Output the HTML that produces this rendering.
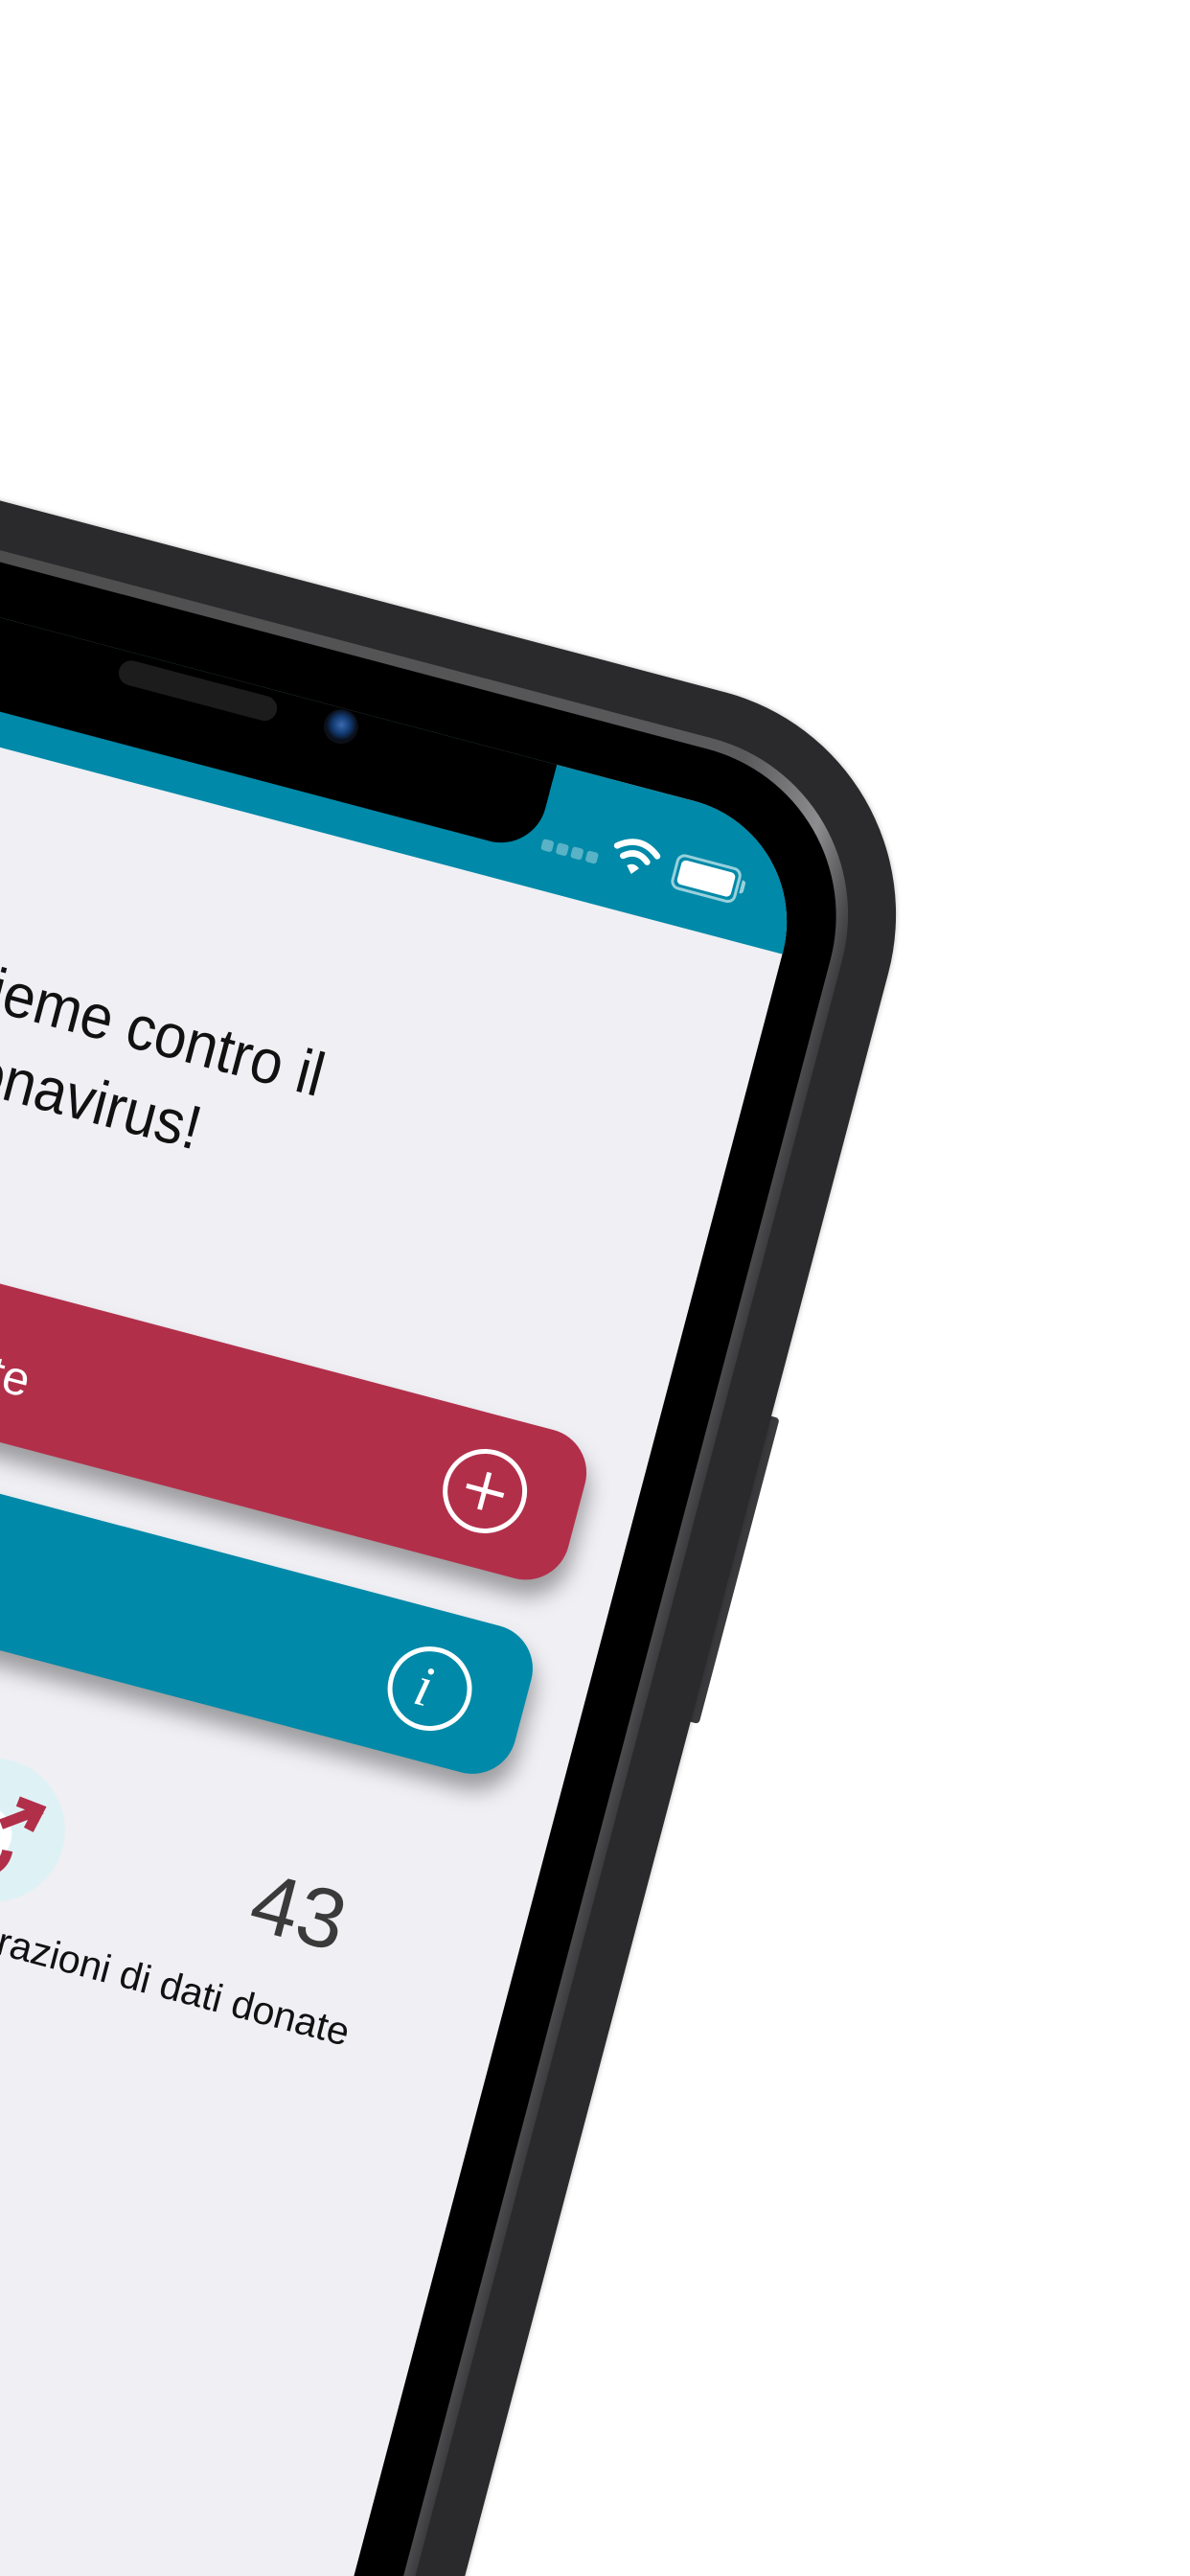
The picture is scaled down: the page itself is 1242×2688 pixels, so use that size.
<!DOCTYPE html>
<html><head><meta charset="utf-8">
<style>
html,body{margin:0;padding:0;background:#fff;width:1242px;height:2688px;overflow:hidden;}
body{font-family:"Liberation Sans",sans-serif;}
#wrap{position:relative;width:1242px;height:2688px;overflow:hidden;background:#fff;}
#rot{position:absolute;left:850px;top:869px;width:0;height:0;transform-origin:0 0;transform:rotate(14.8deg);}
.abs{position:absolute;}
#frame{left:-1512px;top:-118px;width:1624px;height:2900px;border-radius:240px;background:#2a2a2c;box-shadow:0 0 6px rgba(0,0,0,.25);}
#metal{left:-1462px;top:-68px;width:1524px;height:2800px;border-radius:190px;background:linear-gradient(90deg,#444 0%,#5a5a5c 90%,#8d8d8f 96%,#3c3c3e 100%);}
#bezel{left:-1450px;top:-56px;width:1500px;height:2780px;border-radius:180px;background:#000;}
#screen{left:-1400px;top:0;width:1400px;height:2700px;border-radius:0 130px 0 0;background:#efeff4;overflow:hidden;}
#status{left:0;top:0;width:1400px;height:131px;background:#0089a8;}
#notch{left:0;top:-20px;width:1122px;height:115px;background:#000;border-radius:0 0 48px 0;}
#title{left:532px;top:334px;font-size:60px;line-height:80px;color:#111;white-space:nowrap;transform:scaleY(1.08);transform-origin:0 0;}
.btn{border-radius:46px;box-shadow:6px 16px 22px rgba(0,0,0,.35);}
#red{left:-200px;top:672px;width:1542px;height:160px;background:#b22f4a;}
#teal{left:-200px;top:884px;width:1540px;height:158px;background:#0089a8;}
.btxt{position:absolute;color:#fff;font-size:50px;font-weight:300;white-space:nowrap;}
.ic{position:absolute;width:78px;height:78px;border:5px solid #fff;border-radius:50%;}
#num{right:184px;top:1176px;font-size:88px;color:#3a3a3a;line-height:100px;}
#lbl{right:150px;top:1310px;font-size:41px;color:#111;white-space:nowrap;line-height:50px;}
</style></head><body><div id="wrap">
<div id="rot">
  <div class="abs" style="left:105px;top:600px;width:16px;height:330px;background:#3a3a3c;border-radius:4px;"></div>
  <div class="abs" id="frame"></div>
  <div class="abs" id="metal"></div>
  <div class="abs" id="bezel"></div>
  <div class="abs" id="screen">
    <div class="abs" id="status"></div>
    <div class="abs" id="notch"></div>
    <div class="abs" style="left:1122px;top:0;width:28px;height:28px;background:#0089a8;border-radius:18px 0 0 0;"></div>
    <div class="abs" style="left:1128px;top:78px;width:12px;height:12px;border-radius:3px;background:rgba(255,255,255,.35);"></div>
    <div class="abs" style="left:1144px;top:78px;width:12px;height:12px;border-radius:3px;background:rgba(255,255,255,.35);"></div>
    <div class="abs" style="left:1160px;top:78px;width:12px;height:12px;border-radius:3px;background:rgba(255,255,255,.35);"></div>
    <div class="abs" style="left:1176px;top:78px;width:12px;height:12px;border-radius:3px;background:rgba(255,255,255,.35);"></div>
    <svg class="abs" style="left:1200px;top:50px" width="52" height="44" viewBox="0 0 48 40">
      <path d="M4 14 Q24 -2 44 14" stroke="#fff" stroke-width="6" fill="none" stroke-linecap="round"/>
      <path d="M12 22 Q24 12 36 22" stroke="#fff" stroke-width="6" fill="none" stroke-linecap="round"/>
      <path d="M18 30 L24 37 L30 30 Q24 25 18 30Z" fill="#fff"/>
    </svg>
    <div class="abs" style="left:1268px;top:56px;width:64px;height:32px;border:3px solid rgba(255,255,255,.6);border-radius:9px;"></div>
    <div class="abs" style="left:1274px;top:62px;width:58px;height:26px;background:#fff;border-radius:5px;"></div>
    <div class="abs" style="left:1340px;top:67px;width:4px;height:14px;background:rgba(255,255,255,.6);border-radius:0 3px 3px 0;"></div>

    <div class="abs" id="title">Insieme contro il<br>coronavirus!</div>

    <div class="abs btn" id="red">
      <span class="btxt" style="right:588px;top:62px;">Aggiungi fonte</span>
      <div class="ic" style="right:55px;top:36px;">
        <div class="abs" style="left:19px;top:36px;width:40px;height:5px;background:#fff;"></div>
        <div class="abs" style="left:36px;top:19px;width:5px;height:40px;background:#fff;"></div>
      </div>
    </div>
    <div class="abs btn" id="teal">
      <span class="btxt" style="right:602px;top:58px;">Informazioni</span>
      <div class="ic" style="right:56px;top:38px;">
        <span class="abs" style="left:24px;top:6px;font-family:'Liberation Serif',serif;font-style:italic;font-size:60px;color:#fff;line-height:64px;">i</span>
      </div>
    </div>

    <div class="abs" style="left:762px;top:1150px;width:150px;height:150px;border-radius:50%;background:#def2f6;"></div>
    <svg class="abs" style="left:762px;top:1150px" width="150" height="150" viewBox="0 0 150 150">
      <circle cx="66" cy="82" r="24" fill="none" stroke="#fff" stroke-width="12"/>
      <circle cx="66" cy="82" r="16" fill="#0089a8"/>
      <path d="M50 118 Q66 126 82 118 Q96 108 95 92" stroke="#b22f4a" stroke-width="11" fill="none"/>
      <path d="M86 64 L114 44 M98 40 L116 42 L112 60" stroke="#b22f4a" stroke-width="11" fill="none" stroke-linecap="square"/>
    </svg>

    <div class="abs" id="num">43</div>
    <div class="abs" id="lbl">Registrazioni di dati donate</div>
  </div>
  <div class="abs" style="left:-745px;top:8px;width:170px;height:26px;border-radius:13px;background:#1c1c1c;"></div>
  <div class="abs" style="left:-524px;top:1px;width:36px;height:36px;border-radius:50%;background:radial-gradient(circle at 50% 45%,#3a6ab0 0%,#123a70 35%,#0a0f1a 60%,#111 100%);"></div>
</div>
</div></body></html>
